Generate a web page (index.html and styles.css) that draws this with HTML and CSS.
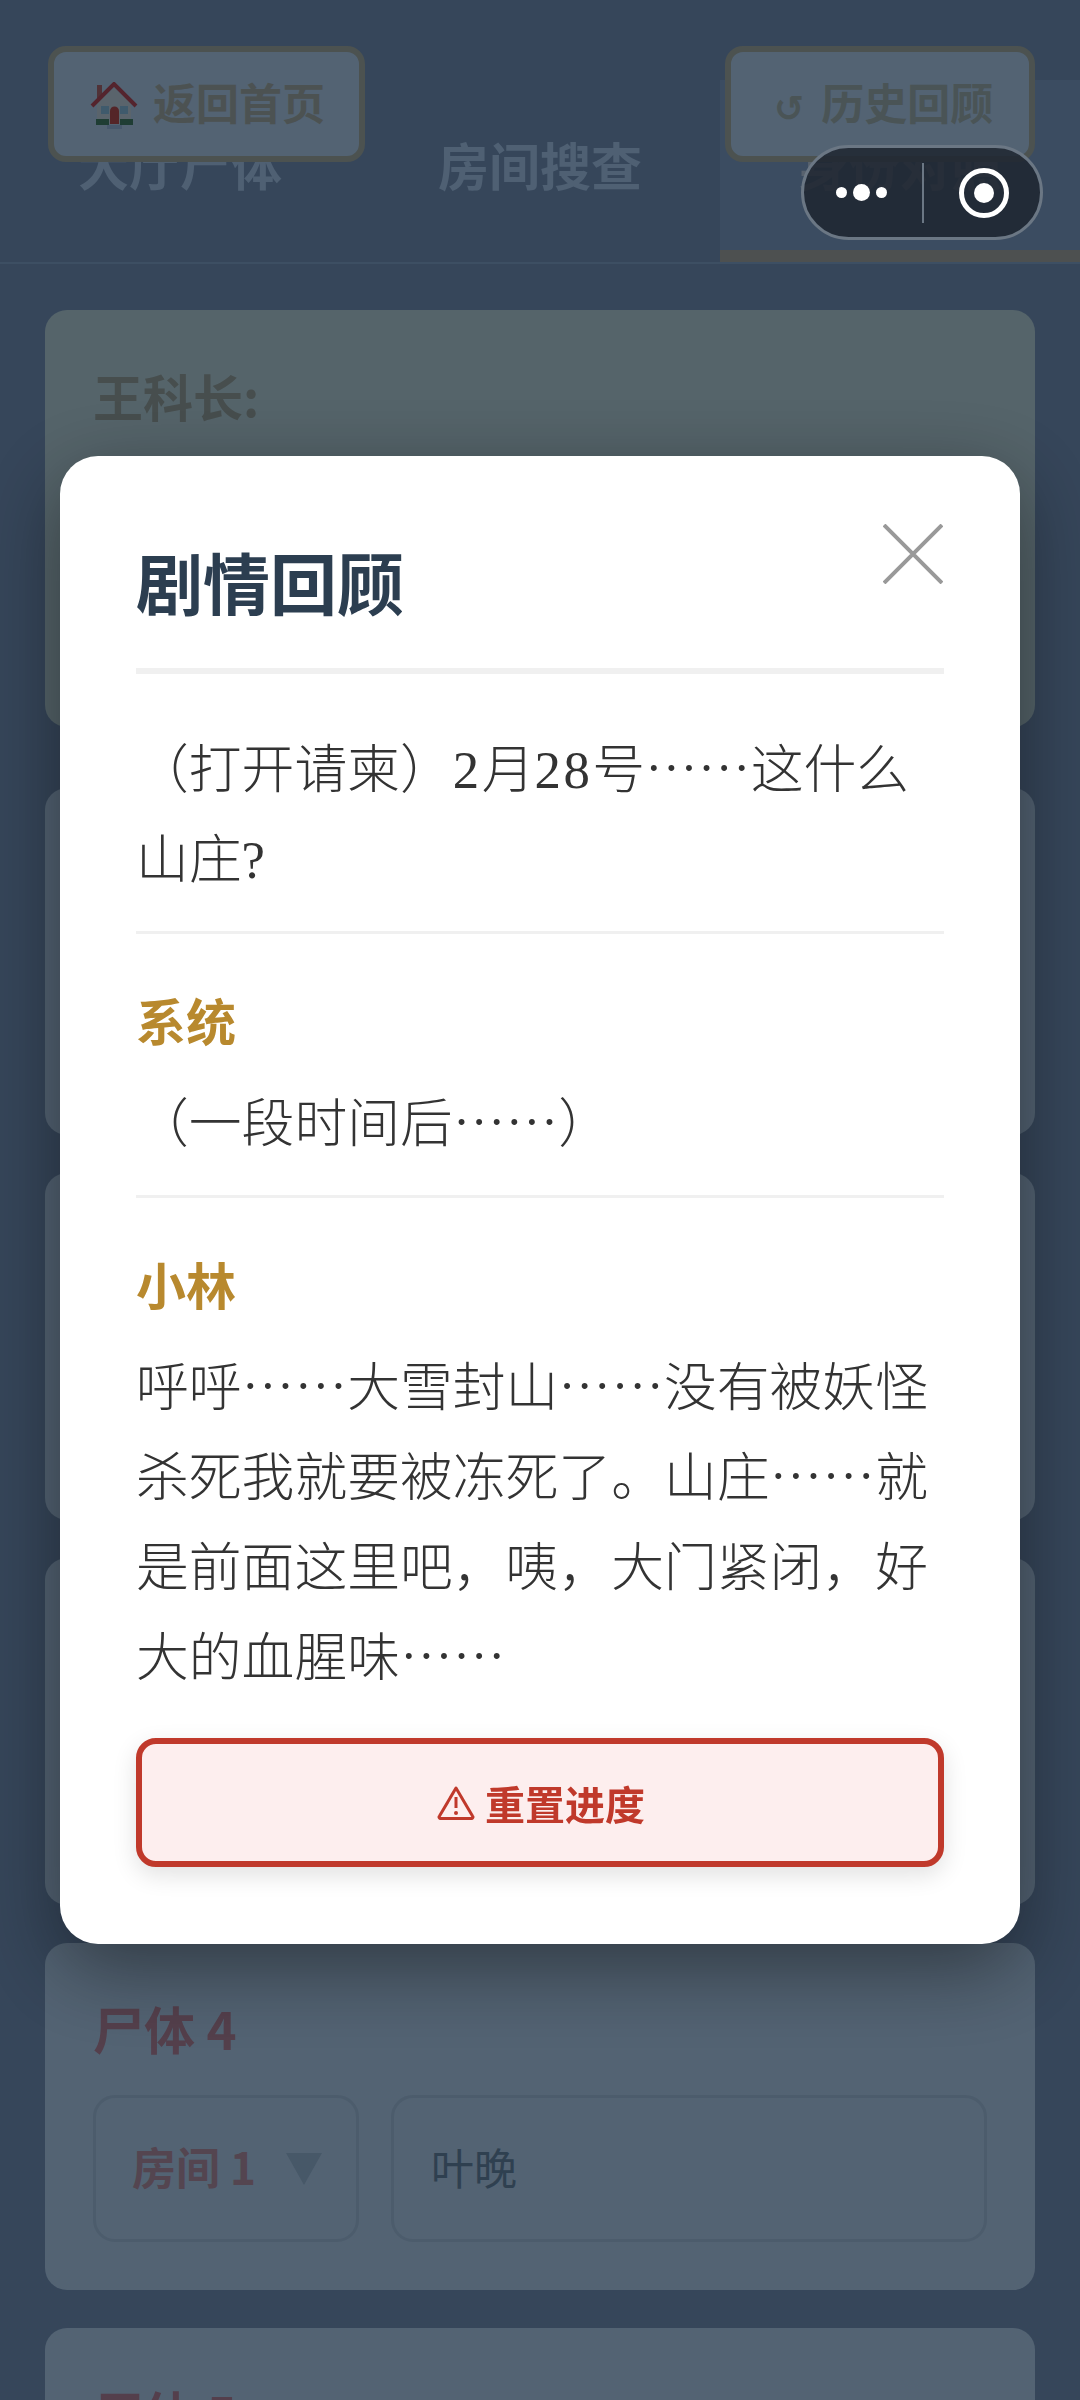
FILE: index.html
```html
<!DOCTYPE html>
<html lang="zh-CN">
<head>
  <meta charset="UTF-8" />
  <title>剧情回顾</title>
  <link rel="stylesheet" href="styles.css">
</head>
<body>
  <div class="page">
    <nav class="tabs">
      <div class="tab">大厅尸体</div>
      <div class="tab">房间搜查</div>
      <div class="tab active">身份对照</div>
    </nav>

    <div class="top-btn back-btn">
      <svg class="house-icon" viewBox="0 0 48 48">
        <rect x="7" y="3" width="5" height="14" fill="#a0646e"/>
        <path d="M7 21 24 6 41 21 41 42 7 42Z" fill="#b4c8d8"/>
        <path d="M2 24 24 2 46 24" fill="none" stroke="#a8485a" stroke-width="4"/>
        <rect x="11" y="24" width="8" height="8" fill="#7fb4d8"/>
        <rect x="30" y="24" width="8" height="8" fill="#7fb4d8"/>
        <path d="M20 42V29a4.500 4.500 0 0 1 9 0V42Z" fill="#a84a50"/>
        <rect x="6" y="37" width="13" height="6" fill="#3f7a68"/>
        <rect x="30" y="37" width="13" height="6" fill="#3f7a68"/>
        <rect x="17" y="43" width="15" height="4" fill="#8eb0d8"/>
      </svg>
      <span>返回首页</span>
    </div>
    <div class="top-btn history-btn">
      <span class="history-icon">↺</span>
      <span>历史回顾</span>
    </div>

    <main class="list">
      <section class="card intro-card">
        <div class="speaker">王科长:</div>
      </section>
      <section class="card">
        <h3 class="body-title">尸体 1</h3>
        <div class="body-row">
          <div class="room-select">房间 1 <i class="caret"></i></div>
          <div class="name-input">叶晚</div>
        </div>
      </section>
      <section class="card">
        <h3 class="body-title">尸体 2</h3>
        <div class="body-row">
          <div class="room-select">房间 1 <i class="caret"></i></div>
          <div class="name-input">叶晚</div>
        </div>
      </section>
      <section class="card">
        <h3 class="body-title">尸体 3</h3>
        <div class="body-row">
          <div class="room-select">房间 1 <i class="caret"></i></div>
          <div class="name-input">叶晚</div>
        </div>
      </section>
      <section class="card">
        <h3 class="body-title">尸体 4</h3>
        <div class="body-row">
          <div class="room-select">房间 1 <i class="caret"></i></div>
          <div class="name-input">叶晚</div>
        </div>
      </section>
      <section class="card">
        <h3 class="body-title">尸体 5</h3>
      </section>
    </main>
  </div>

  <div class="overlay">
    <div class="modal">
      <svg class="close-icon" viewBox="0 0 60 60">
        <path d="M1 1 59 59M59 1 1 59" fill="none" stroke="#999" stroke-width="4"/>
      </svg>
      <h2 class="modal-title">剧情回顾</h2>

      <div class="entry first">
        <p class="line">（打开请柬）<span class="num">2</span>月<span class="num">28</span>号……这什么山庄<span class="num">?</span></p>
      </div>
      <div class="entry">
        <div class="who">系统</div>
        <p class="line">（一段时间后……）</p>
      </div>
      <div class="entry last">
        <div class="who">小林</div>
        <p class="line">呼呼……大雪封山……没有被妖怪杀死我就要被冻死了。山庄……就是前面这里吧，咦，大门紧闭，好大的血腥味……</p>
      </div>

      <button class="reset-btn">
        <svg class="warn-icon" viewBox="0 0 38 36">
          <path d="M19 3 35.500 31a1.500 1.500 0 0 1-1.500 2.500H4A1.500 1.500 0 0 1 2.500 31Z" fill="none" stroke="#c0392b" stroke-width="3" stroke-linejoin="round"/>
          <path d="M19 12V23" stroke="#c0392b" stroke-width="3"/>
          <circle cx="19" cy="28" r="2" fill="#c0392b"/>
        </svg>
        <span>重置进度</span>
      </button>
    </div>
  </div>

  <div class="capsule">
    <div class="dots"><i></i><i class="big"></i><i></i></div>
    <div class="capsule-line"></div>
    <div class="target"><i></i></div>
  </div>
</body>
</html>
```

FILE: styles.css
```css
* {
  box-sizing: border-box;
}

html, body {
  margin: 0;
  height: 2400px;
  overflow: hidden;
}

body {
  font-family: "Noto Sans CJK SC", "Noto Sans", sans-serif;
  background-color: #6c8cb4;
}

.page {
  position: relative;
  height: 2400px;
  overflow: hidden;
}

/* tabs */
.tabs {
  display: flex;
  margin-top: 80px;
  border-bottom: 2px solid #7a9ec6;
}

.tab {
  flex: 1;
  height: 182px;
  padding-top: 54px;
  font-size: 51px;
  line-height: 60px;
  font-weight: 700;
  text-align: center;
  color: #9ec0e6;
}

.tab.active {
  color: #b0c4dc;
  background-color: #7698c2;
  border-bottom: 12px solid #9aa0a0;
}

/* buttons sitting over the tabs */
.top-btn {
  position: absolute;
  top: 46px;
  height: 116px;
  display: flex;
  align-items: center;
  padding-bottom: 6px;
  font-size: 43px;
  font-weight: 700;
  color: #98a4a4;
  background-color: #a6c6e6;
  border: 6px solid #98a4a0;
  border-radius: 18px;
}

.back-btn {
  left: 48px;
  width: 317px;
  padding-left: 36px;
  gap: 15px;
}

.house-icon {
  width: 48px;
  height: 48px;
  margin-top: 10px;
}

.history-btn {
  left: 725px;
  width: 310px;
  padding-left: 43px;
  gap: 17px;
  color: #94a8ac;
}

.history-icon {
  margin-top: 14px;
  font-family: "DejaVu Sans", sans-serif;
  font-size: 36px;
  font-weight: 700;
}

/* cards */
.list {
  display: flex;
  flex-direction: column;
  gap: 38px;
  padding: 46px 45px 0;
}

.card {
  flex: none;
  height: 347px;
  padding: 55px 48px 48px;
  background-color: #a6c6e6;
  border-radius: 22px;
}

.intro-card {
  height: 417px;
  margin-bottom: 23px;
  background-color: #aac8d4;
}

.speaker {
  font-size: 50px;
  line-height: 60px;
  color: #8e9c9c;
  font-weight: 700;
}

.body-title {
  margin: 0 0 37px;
  font-size: 51px;
  line-height: 60px;
  font-weight: 700;
  color: #a87f98;
}

.body-row {
  display: flex;
  gap: 32px;
}

.room-select, .name-input {
  height: 147px;
  display: flex;
  align-items: center;
  padding-bottom: 6px;
  border: 3px solid #98b8d8;
  border-radius: 22px;
}

.room-select {
  width: 266px;
  padding-left: 36px;
  padding-right: 34px;
  justify-content: space-between;
  font-size: 44px;
  font-weight: 700;
  color: #a88aa0;
}

.caret {
  width: 0;
  height: 0;
  margin-top: 6px;
  border-top: 32px solid #8eb0d0;
  border-left: 18px solid transparent;
  border-right: 18px solid transparent;
}

.name-input {
  flex: 1;
  padding-left: 37px;
  font-size: 43px;
  color: #5e80a0;
}

/* modal */
.overlay {
  position: fixed;
  inset: 0;
  display: flex;
  align-items: center;
  justify-content: center;
  background-color: rgba(0, 0, 0, 0.5);
}

.modal {
  position: relative;
  width: 960px;
  height: 1488px;
  padding: 85px 76px 76px;
  background: white;
  border-radius: 38px;
  box-shadow: 0 24px 80px rgba(0, 0, 0, 0.42);
}

.close-icon {
  position: absolute;
  top: 68px;
  right: 77px;
  width: 60px;
  height: 60px;
}

.modal-title {
  margin: 0;
  padding-bottom: 47px;
  font-size: 67px;
  line-height: 80px;
  font-weight: 700;
  color: #2c3e50;
  border-bottom: 6px solid #f0f0f0;
}

.entry {
  padding: 55px 0 31px;
  border-bottom: 3px solid #f0f0f0;
}

.entry.first {
  padding-top: 46px;
}

.entry.last {
  padding-bottom: 0;
  border-bottom: none;
}

.who {
  margin-bottom: 25px;
  font-size: 50px;
  line-height: 60px;
  font-weight: 700;
  color: #b8892e;
}

.line {
  margin: 0;
  font-size: 52.800px;
  line-height: 90px;
  font-weight: 300;
  color: #333;
}

.num {
  font-family: "Liberation Serif", serif;
  font-weight: 400;
  line-height: 0;
  letter-spacing: 2.500px;
}

.reset-btn {
  display: flex;
  align-items: center;
  justify-content: center;
  gap: 10px;
  width: 100%;
  height: 129px;
  margin-top: 40px;
  font-family: inherit;
  font-size: 40px;
  font-weight: 700;
  color: #c0392b;
  background-color: #fdeeee;
  border: 6px solid #c0392b;
  border-radius: 20px;
  box-shadow: 0 8px 24px rgba(0, 0, 0, 0.12);
}

.warn-icon {
  width: 38px;
  height: 36px;
  margin-left: 2px;
}

/* mini program capsule */
.capsule {
  position: absolute;
  top: 145px;
  left: 801px;
  width: 242px;
  height: 95px;
  display: flex;
  align-items: center;
  background-color: rgba(30, 38, 48, 0.85);
  border: 3px solid #6b7784;
  border-radius: 48px;
}

.dots {
  width: 118px;
  display: flex;
  align-items: center;
  justify-content: center;
  gap: 6px;
  padding-right: 3px;
}

.dots i {
  width: 11px;
  height: 11px;
  background: white;
  border-radius: 50%;
}

.dots i.big {
  width: 17px;
  height: 17px;
}

.capsule-line {
  width: 2px;
  height: 60px;
  background-color: #6b7784;
}

.target {
  flex: 1;
  display: flex;
  align-items: center;
  justify-content: center;
  padding-left: 4px;
}

.target i {
  display: flex;
  width: 50px;
  height: 50px;
  border: 5px solid white;
  border-radius: 50%;
}

.target i::after {
  content: "";
  width: 20px;
  height: 20px;
  margin: auto;
  background: white;
  border-radius: 50%;
}
```
